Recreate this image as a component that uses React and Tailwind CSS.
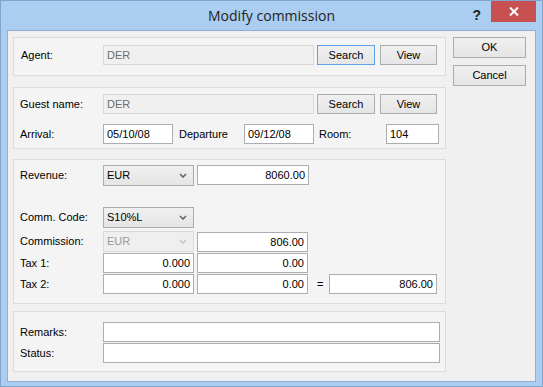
import React from 'react';

const Btn = ({ children, focused, className = '' }) => (
  <div
    className={`flex items-center justify-center h-[20px] border bg-gradient-to-b from-[#f0f0f0] to-[#e5e5e5] text-black ${focused ? 'border-[#5ea1e4]' : 'border-[#acacac]'} ${className}`}
  >
    {children}
  </div>
);

const Input = ({ value = '', right, disabled, className = '' }) => (
  <div
    className={`flex items-center h-[20px] border px-[3px] ${right ? 'justify-end' : 'justify-start'} ${disabled ? 'border-[#d9d9d9] bg-[#f0f0f0] text-[#6d6d6d]' : 'border-[#abadb3] bg-white text-black'} ${className}`}
  >
    {value}
  </div>
);

const Combo = ({ value, disabled }) => (
  <div
    className={`flex items-center justify-between w-[91px] h-[21px] border pl-[3px] pr-[6px] ${disabled ? 'border-[#d9d9d9] bg-[#efefef] text-[#9a9a9a]' : 'border-[#acacac] bg-gradient-to-b from-[#f0f0f0] to-[#e5e5e5] text-black'}`}
  >
    <span>{value}</span>
    <svg width="8" height="5" viewBox="0 0 8 5" fill="none">
      <path d="M1 1 L4 4 L7 1" stroke={disabled ? '#c4c4c4' : '#606060'} strokeWidth="1.5" />
    </svg>
  </div>
);

const Group = ({ children, className = '' }) => (
  <div className={`flex flex-col border border-[#dcdcdc] bg-[#f4f4f4] ${className}`}>{children}</div>
);

export default function App() {
  return (
    <div className="w-[543px] h-[387px] flex flex-col bg-[#aacdf0] border border-[#7fa4d0] font-['Liberation_Sans',Arial,sans-serif] text-[11px] text-black">
      {/* title bar */}
      <div className="flex h-[29px]">
        <div className="flex-1" />
        <div className="flex items-center font-['Open_Sans',sans-serif] text-[14px] text-[#1e1e1e]">Modify commission</div>
        <div className="flex-1 flex justify-end items-start">
          <span className="mt-[4px] mr-[10px] font-['Liberation_Sans',sans-serif] font-bold text-[14px] text-[#222]">?</span>
          <div className="flex items-center justify-center w-[45px] h-[21px] mr-[6px] bg-[#c75050]">
            <svg width="10" height="9" viewBox="0 0 10 9">
              <path d="M1 0.5 L9 8.5 M9 0.5 L1 8.5" stroke="#fff" strokeWidth="2" />
            </svg>
          </div>
        </div>
      </div>

      {/* client area */}
      <div className="flex-1 mx-[6px] mb-[4px] flex gap-[7px] border border-[#8fb0d6] bg-[#f0f0f0] pl-[5px] pt-[6px]">
        <div className="w-[433px] flex flex-col">
          {/* agent */}
          <Group className="h-[39px] pt-[7px] pl-[7px]">
            <div className="flex items-center h-[20px]">
              <span className="w-[82px]">Agent:</span>
              <Input value="DER" disabled className="w-[211px] h-[19px]" />
              <Btn focused className="ml-[3px] w-[58px]">Search</Btn>
              <Btn className="ml-[5px] w-[57px]">View</Btn>
            </div>
          </Group>

          {/* guest */}
          <Group className="h-[62px] mt-[11px] pt-[6px] pl-[6px]">
            <div className="flex items-center h-[20px]">
              <span className="w-[83px]">Guest name:</span>
              <Input value="DER" disabled className="w-[211px] h-[19px]" />
              <Btn className="ml-[3px] w-[58px]">Search</Btn>
              <Btn className="ml-[5px] w-[57px]">View</Btn>
            </div>
            <div className="flex items-center h-[20px] mt-[10px]">
              <span className="w-[83px]">Arrival:</span>
              <Input value="05/10/08" className="w-[70px]" />
              <span className="ml-[6px] w-[65px]">Departure</span>
              <Input value="09/12/08" className="w-[70px]" />
              <span className="ml-[5px] w-[67px]">Room:</span>
              <Input value="104" className="w-[53px]" />
            </div>
          </Group>

          {/* amounts */}
          <Group className="h-[145px] mt-[10px] pt-[5px] pl-[6px]">
            <div className="flex items-start h-[21px]">
              <span className="w-[83px] leading-[21px]">Revenue:</span>
              <Combo value="EUR" />
              <Input value="8060.00" right className="ml-[3px] w-[112px]" />
            </div>
            <div className="flex items-start h-[21px] mt-[21px]">
              <span className="w-[83px] leading-[21px]">Comm. Code:</span>
              <Combo value="S10%L" />
            </div>
            <div className="flex items-start h-[22px] mt-[3px]">
              <span className="w-[83px] leading-[20px]">Commission:</span>
              <Combo value="EUR" disabled />
              <Input value="806.00" right className="ml-[3px] w-[111px] mt-[1px]" />
            </div>
            <div className="flex items-start h-[21px]">
              <span className="w-[83px] leading-[20px]">Tax 1:</span>
              <Input value="0.000" right className="w-[91px]" />
              <Input value="0.00" right className="ml-[3px] w-[111px]" />
            </div>
            <div className="flex items-start h-[21px]">
              <span className="w-[83px] leading-[20px]">Tax 2:</span>
              <Input value="0.000" right className="w-[91px]" />
              <Input value="0.00" right className="ml-[3px] w-[111px]" />
              <span className="ml-[9px] w-[12px] leading-[20px]">=</span>
              <Input value="806.00" right className="w-[108px]" />
            </div>
          </Group>

          {/* remarks */}
          <Group className="h-[61px] mt-[7px] pt-[10px] pl-[6px]">
            <div className="flex items-start h-[21px]">
              <span className="w-[83px] leading-[20px]">Remarks:</span>
              <Input className="w-[337px]" />
            </div>
            <div className="flex items-start h-[21px]">
              <span className="w-[83px] leading-[20px]">Status:</span>
              <Input className="w-[337px]" />
            </div>
          </Group>
        </div>

        {/* dialog buttons */}
        <div className="w-[73px] flex flex-col">
          <Btn className="h-[21px] text-[11px]">OK</Btn>
          <Btn className="h-[21px] mt-[7px]">Cancel</Btn>
        </div>
      </div>
    </div>
  );
}
